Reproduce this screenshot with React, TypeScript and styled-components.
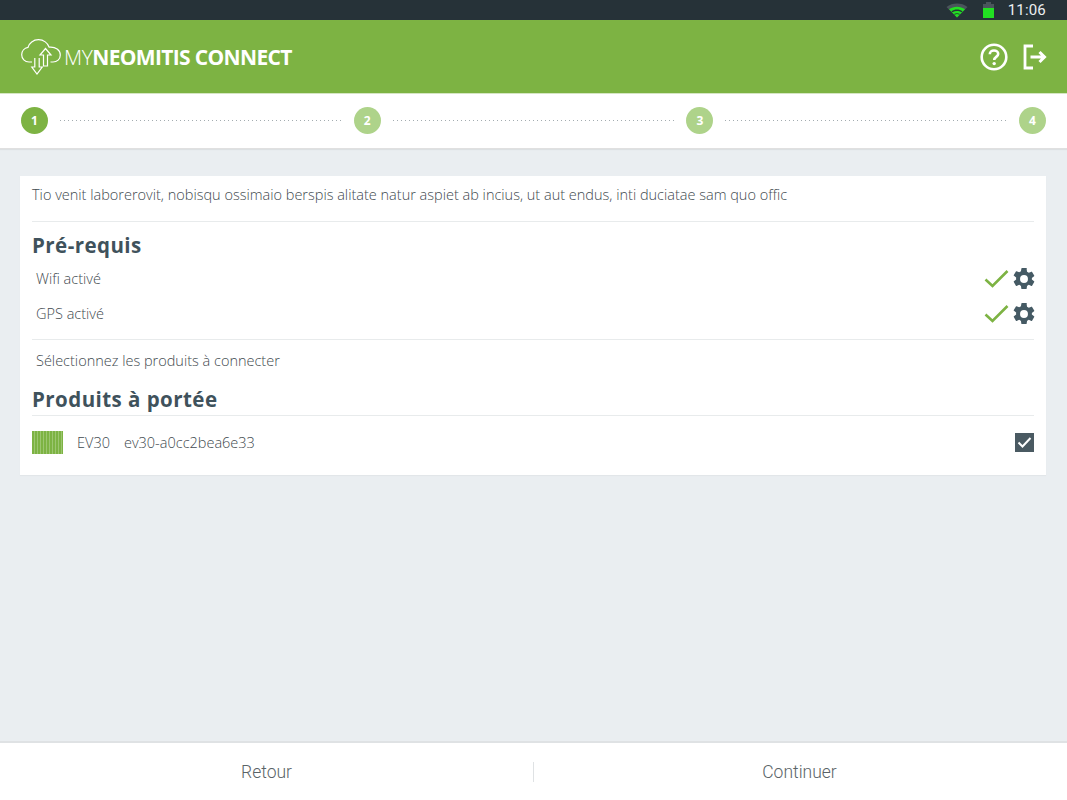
import React from "react";
import styled, { createGlobalStyle } from "styled-components";

const GlobalStyle = createGlobalStyle`
  html, body {
    margin: 0;
    padding: 0;
    background: #eaeef1;
    font-family: "Open Sans", "Liberation Sans", sans-serif;
  }
`;

const Page = styled.div`
  width: 1067px;
  height: 800px;
  display: flex;
  flex-direction: column;
  overflow: hidden;
  background: #eaeef1;
`;

const StatusBar = styled.div`
  height: 20px;
  background: #263238;
  display: flex;
  align-items: center;
  justify-content: flex-end;
  padding-right: 21px;
  color: #eceff1;
  font-family: Roboto, sans-serif;
  font-size: 15px;
  box-sizing: border-box;
`;

const StatusTime = styled.span`
  margin-left: 14px;
  letter-spacing: 0.2px;
`;

const BatteryIcon = styled.svg`
  margin-left: 15px;
`;

const Header = styled.header`
  height: 74px;
  background: #7db343;
  border-bottom: 1px solid #d5e6c3;
  box-sizing: border-box;
  display: flex;
  align-items: center;
  justify-content: space-between;
  padding: 0 20px 0 21px;
`;

const Brand = styled.div`
  display: flex;
  align-items: center;
  gap: 3px;
  color: #fff;
  font-size: 21px;
`;

const BrandText = styled.span`
  font-weight: 300;
  letter-spacing: -0.5px;
  b {
    font-weight: 700;
    letter-spacing: -0.65px;
  }
`;

const HeaderActions = styled.div`
  display: flex;
  align-items: center;
  gap: 15px;
`;

const Stepper = styled.div`
  height: 55px;
  background: #fff;
  box-sizing: border-box;
  padding: 0 21px 1px;
  display: flex;
  align-items: center;
  border-bottom: 1px solid #e0e0e0;
  box-shadow: 0 1px 1px rgba(0, 0, 0, 0.06);
`;

const StepDot = styled.div<{ $active?: boolean }>`
  width: 27px;
  height: 27px;
  flex: none;
  border-radius: 50%;
  background: ${({ $active }) => ($active ? "#7db343" : "#aed38a")};
  color: #fff;
  font-size: 12px;
  font-weight: 700;
  display: flex;
  align-items: center;
  justify-content: center;
`;

const StepLine = styled.div`
  flex: 1;
  margin: 0 12px;
  height: 1px;
  background: repeating-linear-gradient(90deg, #a3acb0 0, #a3acb0 1px, transparent 1px, transparent 4px);
`;

const Main = styled.main`
  flex: 1;
  padding: 27px 21px 0 20px;
`;

const Card = styled.section`
  background: #fff;
  height: 299px;
  box-sizing: border-box;
  padding: 0 12px;
  box-shadow: 0 1px 1px rgba(0, 0, 0, 0.03);
`;

const Intro = styled.p`
  margin: 0;
  height: 46px;
  box-sizing: border-box;
  padding-top: 9px;
  font-size: 14.5px;
  line-height: 20px;
  font-weight: 300;
  color: #3f4a4f;
  border-bottom: 1px solid #e8ebec;
`;

const SectionTitle = styled.h2`
  margin: 0;
  font-size: 20.5px;
  font-weight: 700;
  line-height: 27px;
  letter-spacing: 0.45px;
  color: #3f525c;
`;

const PrereqTitle = styled(SectionTitle)`
  padding-top: 10px;
`;

const RequirementList = styled.div`
  padding-top: 2px;
  border-bottom: 1px solid #e8ebec;
  padding-bottom: 8px;
`;

const RequirementRow = styled.div`
  height: 35px;
  display: flex;
  align-items: center;
  justify-content: space-between;
  padding-left: 4px;
  font-size: 14.5px;
  font-weight: 300;
  color: #3f4a4f;
`;

const RequirementIcons = styled.div`
  display: flex;
  align-items: center;
  gap: 4px;
  margin-right: -1px;
`;

const SelectHint = styled.div`
  padding: 11px 0 0 4px;
  font-size: 14.5px;
  line-height: 20px;
  font-weight: 300;
  color: #3f4a4f;
`;

const ProductsTitle = styled(SectionTitle)`
  padding-top: 15px;
  padding-bottom: 2px;
  border-bottom: 1px solid #e8ebec;
`;

const ProductRow = styled.div`
  display: flex;
  align-items: center;
  height: 53px;
  font-size: 14.5px;
  font-weight: 300;
  color: #3f4a4f;
`;

const ProductName = styled.span`
  margin-left: 14px;
`;

const ProductId = styled.span`
  margin-left: 14px;
  flex: 1;
`;

const Barcode = styled.div`
  width: 31px;
  height: 23px;
  background: repeating-linear-gradient(
    90deg,
    #7db343 0,
    #7db343 2px,
    #9cc670 2px,
    #9cc670 3px
  );
`;

const CheckBox = styled.div`
  width: 19px;
  height: 19px;
  background: #4a5a62;
  display: flex;
  align-items: center;
  justify-content: center;
`;

const Footer = styled.footer`
  height: 59px;
  background: #fff;
  border-top: 2px solid #dfe2e4;
  box-sizing: border-box;
  display: flex;
  align-items: center;
`;

const FooterButton = styled.button`
  flex: 1;
  height: 20px;
  border: 0;
  padding: 0;
  background: transparent;
  font-family: Roboto, sans-serif;
  font-weight: 300;
  font-size: 17.5px;
  color: #5a6367;
  & + & {
    border-left: 1px solid #dfe2e4;
    text-indent: -2px;
  }
`;

const Check = () => (
  <svg width="25" height="20" viewBox="0 0 25 20">
    <path d="M1.5 10.5 L8.5 17 L23.5 2" fill="none" stroke="#7db343" strokeWidth="2.6" />
  </svg>
);

const GEAR =
  "M19.14 12.94c.04-.3.06-.61.06-.94s-.02-.64-.07-.94l2.03-1.58a.49.49 0 0 0 .12-.61l-1.92-3.32a.49.49 0 0 0-.59-.22l-2.39.96a7 7 0 0 0-1.62-.94l-.36-2.54A.48.48 0 0 0 13.92 2h-3.84a.47.47 0 0 0-.47.41l-.36 2.54c-.59.24-1.13.57-1.62.94l-2.39-.96a.49.49 0 0 0-.59.22L2.73 8.47a.47.47 0 0 0 .12.61l2.03 1.58c-.05.3-.08.63-.08.94s.02.64.07.94l-2.03 1.58a.49.49 0 0 0-.12.61l1.92 3.32c.12.22.37.29.59.22l2.39-.96c.5.38 1.03.7 1.62.94l.36 2.54c.05.24.24.41.48.41h3.84c.24 0 .44-.17.47-.41l.36-2.54a7 7 0 0 0 1.62-.94l2.39.96c.22.08.47 0 .59-.22l1.92-3.32a.47.47 0 0 0-.12-.61l-2.01-1.58zM12 15.6A3.6 3.6 0 1 1 12 8.4a3.6 3.6 0 0 1 0 7.2z";

const Gear = () => (
  <svg width="22" height="22" viewBox="2.5 2 19 20">
    <path d={GEAR} fill="#455a64" />
  </svg>
);

const CloudLogo = () => (
  <svg width="40" height="36" viewBox="0 0 40 36" fill="none" stroke="#fff" strokeWidth="1.2">
    <path d="M11 23 H8 C3.8 23 0.7 19.8 0.7 15.8 C0.7 12 3.4 9 7 8.4 C8 4 12.4 0.7 17.5 0.7 C22.6 0.7 26.8 4 28.2 8.2 C34.6 7.6 39.3 11 39.3 16 C39.3 20.2 36 23 32 23 H29.5" />
    <path d="M22.5 27 V16 H19 L24.5 9.5 L30 16 H26.5 V27 Z" />
    <path d="M13.8 19 V28 H10.8 L16 35 L21.2 28 H18.2 V19" />
  </svg>
);

const HelpIcon = () => (
  <svg width="28" height="28" viewBox="0 0 28 28" fill="none" stroke="#fff">
    <circle cx="14" cy="14" r="12.3" strokeWidth="2.6" />
    <path d="M9.8 11.2 C9.8 8.8 11.7 7.5 14 7.5 C16.4 7.5 18.2 9 18.2 11 C18.2 13.8 14.2 14 14.2 17" strokeWidth="2.6" />
    <circle cx="14.2" cy="20.6" r="1.7" fill="#fff" stroke="none" />
  </svg>
);

const ExitIcon = () => (
  <svg width="24" height="26" viewBox="0 0 24 26" fill="none" stroke="#fff">
    <path d="M10 2 H2 V24 H10" strokeWidth="2.8" />
    <path d="M7.5 13 H21 M16.5 8 L21.5 13 L16.5 18" strokeWidth="3" />
  </svg>
);

const App: React.FC = () => {
  return (
    <Page>
      <GlobalStyle />
      <StatusBar>
        <svg width="22" height="15" viewBox="0 0 22 15">
          <path d="M11 14.5 L0.5 4 C6.5 -0.6 15.5 -0.6 21.5 4 Z" fill="#4a555b" />
          <path d="M11 14.5 L3 6.3 C7.6 2.8 14.4 2.8 19 6.3 Z" fill="#22e022" />
          <path d="M5.5 8.4 C8.6 6 13.4 6 16.5 8.4 L15.6 9.3 C12.8 7.4 9.2 7.4 6.4 9.3 Z" fill="#263238" />
          <path d="M8 11 C9.8 9.9 12.2 9.9 14 11 L13.3 11.7 C11.7 10.9 10.3 10.9 8.7 11.7 Z" fill="#263238" />
        </svg>
        <BatteryIcon width="11" height="16" viewBox="0 0 11 16">
          <path d="M3 0 H8 V2 H11 V16 H0 V2 H3 Z" fill="#4a555b" />
          <rect x="0" y="6" width="11" height="10" fill="#22e022" />
        </BatteryIcon>
        <StatusTime>11:06</StatusTime>
      </StatusBar>
      <Header>
        <Brand>
          <CloudLogo />
          <BrandText>
            MY<b>NEOMITIS CONNECT</b>
          </BrandText>
        </Brand>
        <HeaderActions>
          <HelpIcon />
          <ExitIcon />
        </HeaderActions>
      </Header>
      <Stepper>
        <StepDot $active>1</StepDot>
        <StepLine />
        <StepDot>2</StepDot>
        <StepLine />
        <StepDot>3</StepDot>
        <StepLine />
        <StepDot>4</StepDot>
      </Stepper>
      <Main>
        <Card>
          <Intro>
            Tio venit laborerovit, nobisqu ossimaio berspis alitate natur aspiet ab incius, ut aut endus,
            inti duciatae sam quo offic
          </Intro>
          <PrereqTitle>Pré-requis</PrereqTitle>
          <RequirementList>
            <RequirementRow>
              Wifi activé
              <RequirementIcons>
                <Check />
                <Gear />
              </RequirementIcons>
            </RequirementRow>
            <RequirementRow>
              GPS activé
              <RequirementIcons>
                <Check />
                <Gear />
              </RequirementIcons>
            </RequirementRow>
          </RequirementList>
          <SelectHint>Sélectionnez les produits à connecter</SelectHint>
          <ProductsTitle>Produits à portée</ProductsTitle>
          <ProductRow>
            <Barcode />
            <ProductName>EV30</ProductName>
            <ProductId>ev30-a0cc2bea6e33</ProductId>
            <CheckBox>
              <svg width="15" height="13" viewBox="0 0 15 13">
                <path d="M1.5 6.5 L5.5 10.5 L13.5 2" fill="none" stroke="#fff" strokeWidth="2" />
              </svg>
            </CheckBox>
          </ProductRow>
        </Card>
      </Main>
      <Footer>
        <FooterButton>Retour</FooterButton>
        <FooterButton>Continuer</FooterButton>
      </Footer>
    </Page>
  );
};

export default App;
